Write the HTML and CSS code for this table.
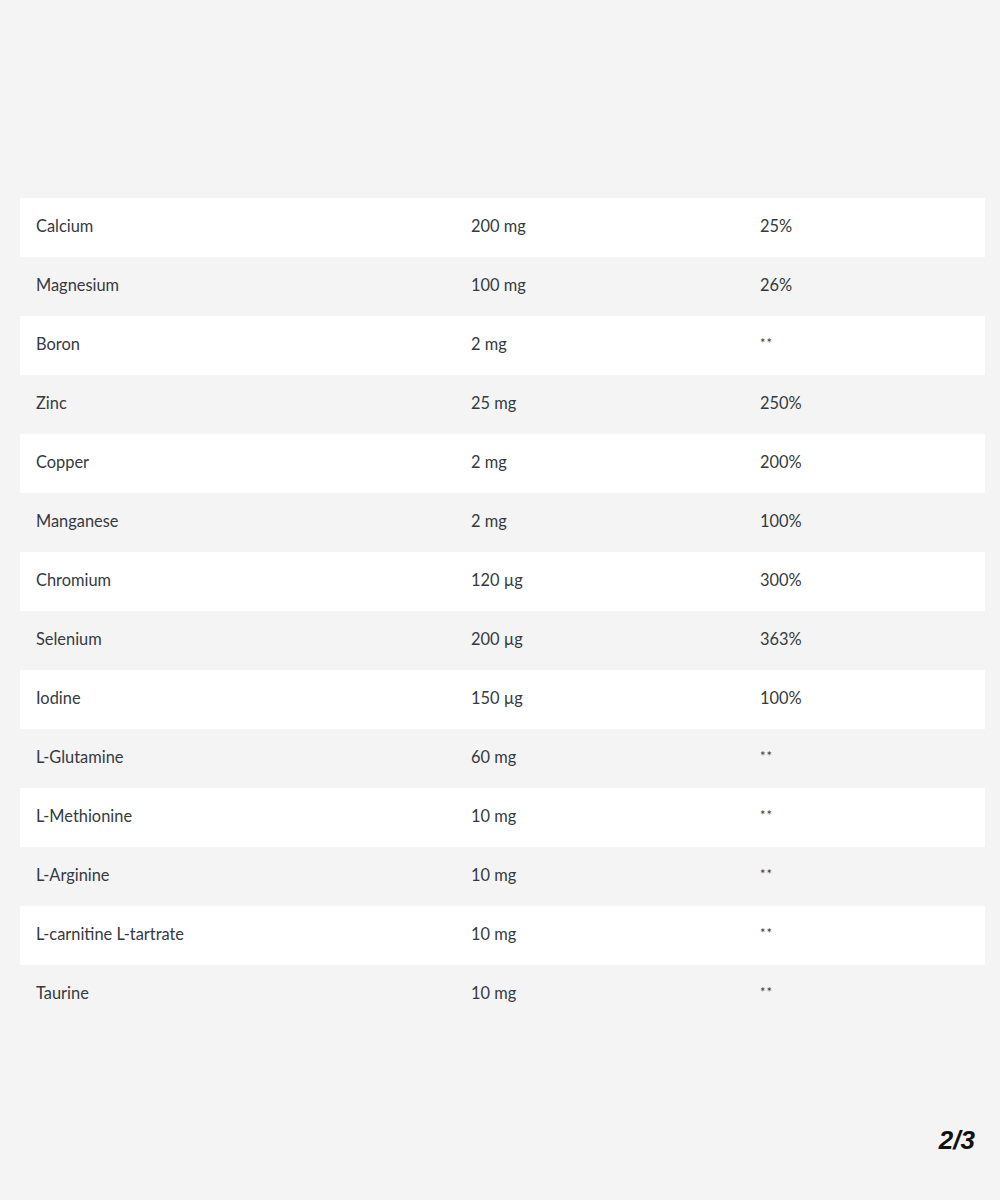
FILE: index.html
```html
<!DOCTYPE html>
<html>
<head>
<meta charset="utf-8">
<link rel="stylesheet" href="styles.css">
</head>
<body>
<div class="page">
  <div class="table">
    <div class="row"><span>Calcium</span><span>200 mg</span><span>25%</span></div>
    <div class="row"><span>Magnesium</span><span>100 mg</span><span>26%</span></div>
    <div class="row"><span>Boron</span><span>2 mg</span><span class="ast">**</span></div>
    <div class="row"><span>Zinc</span><span>25 mg</span><span>250%</span></div>
    <div class="row"><span>Copper</span><span>2 mg</span><span>200%</span></div>
    <div class="row"><span>Manganese</span><span>2 mg</span><span>100%</span></div>
    <div class="row"><span>Chromium</span><span>120 µg</span><span>300%</span></div>
    <div class="row"><span>Selenium</span><span>200 µg</span><span>363%</span></div>
    <div class="row"><span>Iodine</span><span>150 µg</span><span>100%</span></div>
    <div class="row"><span>L-Glutamine</span><span>60 mg</span><span class="ast">**</span></div>
    <div class="row"><span>L-Methionine</span><span>10 mg</span><span class="ast">**</span></div>
    <div class="row"><span>L-Arginine</span><span>10 mg</span><span class="ast">**</span></div>
    <div class="row"><span>L-carnitine L-tartrate</span><span>10 mg</span><span class="ast">**</span></div>
    <div class="row"><span>Taurine</span><span>10 mg</span><span class="ast">**</span></div>
  </div>
  <div class="pager">2/3</div>
</div>
</body>
</html>
```

FILE: styles.css
```css
html, body {
  margin: 0;
  padding: 0;
  background: #f4f4f4;
}
.page {
  width: 1000px;
  height: 1200px;
  box-sizing: border-box;
  padding: 198px 15px 0 20px;
  font-family: Lato, "Open Sans", sans-serif;
  color: #353a40;
  position: relative;
}
.table {
  display: flex;
  flex-direction: column;
}
.row {
  display: grid;
  grid-template-columns: 435px 289px 1fr;
  height: 59px;
  align-items: center;
  padding-left: 16px;
  padding-bottom: 4px;
  box-sizing: border-box;
  font-size: 16.4px;
}
.row:nth-child(odd) {
  background: #ffffff;
}
.row:nth-child(even) {
  background: #f4f4f4;
}
.ast {
  font-size: 13px;
  letter-spacing: 1px;
  position: relative;
  top: -1px;
}
.pager {
  position: absolute;
  right: 25px;
  top: 1125px;
  font-family: "Liberation Sans", Arial, sans-serif;
  font-weight: bold;
  font-style: italic;
  font-size: 26px;
  color: #111;
}
```
